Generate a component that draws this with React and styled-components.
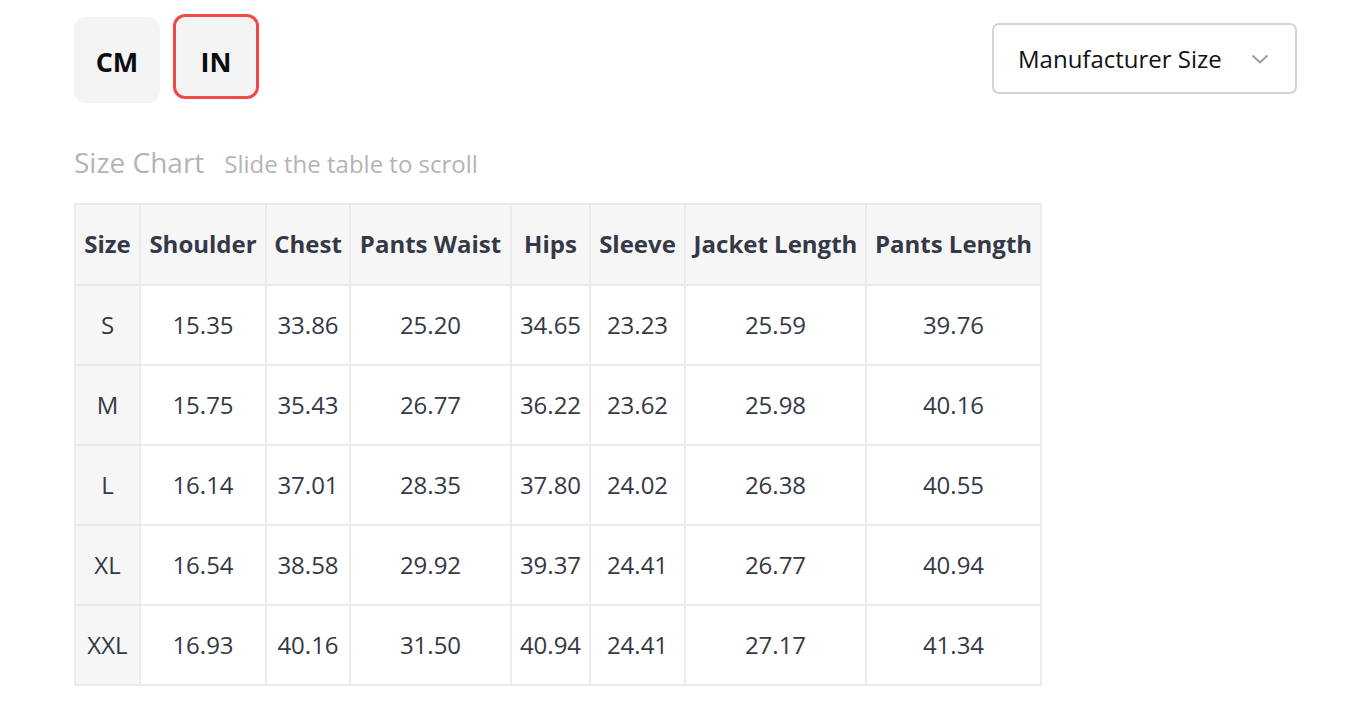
import styled, { createGlobalStyle } from "styled-components";

const GlobalStyle = createGlobalStyle`
    body {
        margin: 0;
        background: #ffffff;
        font-family: "Open Sans", "Noto Sans", sans-serif;
    }
`;

const columns = [
    { title: "Size", width: 65 },
    { title: "Shoulder", width: 126 },
    { title: "Chest", width: 84 },
    { title: "Pants Waist", width: 161 },
    { title: "Hips", width: 79 },
    { title: "Sleeve", width: 95 },
    { title: "Jacket Length", width: 181 },
    { title: "Pants Length", width: 175 },
];

const rows = [
    ["S", "15.35", "33.86", "25.20", "34.65", "23.23", "25.59", "39.76"],
    ["M", "15.75", "35.43", "26.77", "36.22", "23.62", "25.98", "40.16"],
    ["L", "16.14", "37.01", "28.35", "37.80", "24.02", "26.38", "40.55"],
    ["XL", "16.54", "38.58", "29.92", "39.37", "24.41", "26.77", "40.94"],
    ["XXL", "16.93", "40.16", "31.50", "40.94", "24.41", "27.17", "41.34"],
];

const ChevronDown = () => (
    <svg width="18" height="12" viewBox="0 0 18 12" fill="none">
        <path d="M1.5 2.5 L9 9.5 L16.5 2.5" stroke="#9a9a9a" strokeWidth="2" />
    </svg>
);

const App = () => {
    return (
        <Page>
            <GlobalStyle />
            <TopBar>
                <UnitGroup>
                    <UnitBtn>CM</UnitBtn>
                    <UnitBtn $active>IN</UnitBtn>
                </UnitGroup>
                <Select>
                    <span>Manufacturer Size</span>
                    <ChevronDown />
                </Select>
            </TopBar>
            <Heading>
                <Title>Size Chart</Title>
                <Hint>Slide the table to scroll</Hint>
            </Heading>
            <Table>
                <colgroup>
                    {columns.map((c) => (
                        <col key={c.title} style={{ width: c.width }} />
                    ))}
                </colgroup>
                <thead>
                    <tr>
                        {columns.map((c) => (
                            <Th key={c.title}>{c.title}</Th>
                        ))}
                    </tr>
                </thead>
                <tbody>
                    {rows.map((r) => (
                        <tr key={r[0]}>
                            {r.map((v, i) => (
                                <Td key={i} $first={i === 0}>{v}</Td>
                            ))}
                        </tr>
                    ))}
                </tbody>
            </Table>
        </Page>
    );
};

export default App;

const Page = styled.div`
    padding: 14px 71px 0 74px;
`;

const TopBar = styled.div`
    display: flex;
    justify-content: space-between;
    align-items: flex-start;
`;

const UnitGroup = styled.div`
    display: flex;
    align-items: flex-start;
    gap: 13px;
`;

const UnitBtn = styled.div`
    box-sizing: border-box;
    width: 86px;
    height: ${(p) => (p.$active ? "85px" : "86px")};
    margin-top: ${(p) => (p.$active ? "0" : "3px")};
    padding-top: 27px;
    background: #f4f4f4;
    border-radius: 12px;
    border: ${(p) => (p.$active ? "3px solid #f2494b" : "none")};
    font-size: 27px;
    line-height: 36px;
    font-weight: 700;
    text-align: center;
    color: #0c0c0c;
`;

const Select = styled.div`
    box-sizing: border-box;
    margin-top: 9px;
    width: 305px;
    height: 71px;
    border: 2px solid #d4d4d4;
    border-radius: 7px;
    display: flex;
    align-items: center;
    justify-content: space-between;
    padding: 0 26px 0 24px;
    font-size: 24px;
    color: #111111;
`;

const Heading = styled.div`
    display: flex;
    align-items: baseline;
    gap: 20px;
    margin-top: 40px;
    height: 48px;
`;

const Title = styled.span`
    font-size: 28px;
    color: #b4b4b4;
`;

const Hint = styled.span`
    font-size: 24px;
    color: #b4b4b4;
`;

const Table = styled.table`
    margin-top: 12px;
    border-collapse: collapse;
    table-layout: fixed;
    width: 966px;
`;

const Th = styled.th`
    height: 77px;
    padding: 0 0 2px;
    background: #f6f6f6;
    border: 2px solid #ebebeb;
    font-size: 24px;
    font-weight: 700;
    color: #353846;
    text-align: center;
    white-space: nowrap;
`;

const Td = styled.td`
    height: 76px;
    padding: 0 0 2px;
    background: ${(p) => (p.$first ? "#f6f6f6" : "#ffffff")};
    border: 2px solid #ebebeb;
    font-size: 24px;
    color: #353846;
    text-align: center;
`;
